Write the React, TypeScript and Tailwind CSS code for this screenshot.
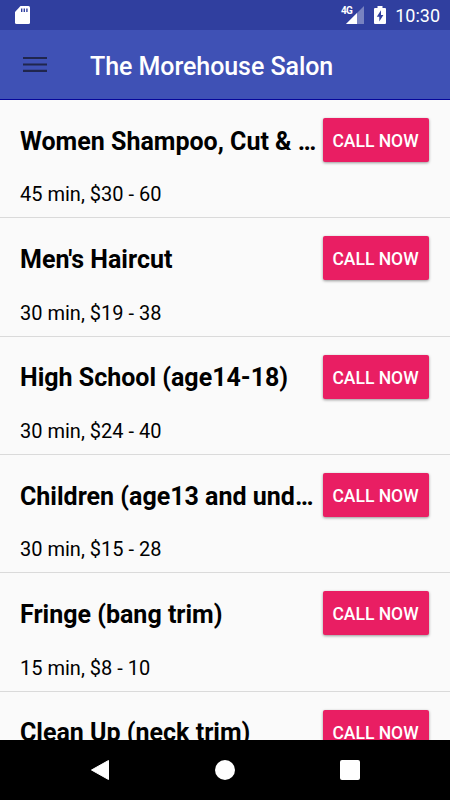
const services = [
  { name: 'Women Shampoo, Cut & …', detail: '45 min, $30 - 60' },
  { name: "Men's Haircut", detail: '30 min, $19 - 38' },
  { name: 'High School (age14-18)', detail: '30 min, $24 - 40' },
  { name: 'Children (age13 and und…', detail: '30 min, $15 - 28' },
  { name: 'Fringe (bang trim)', detail: '15 min, $8 - 10' },
  { name: 'Clean Up (neck trim)', detail: '' },
];

function StatusBar() {
  return (
    <div className="flex h-[30px] shrink-0 items-center bg-[#303f9f] pr-2.5 pl-[15px]">
      <svg width="15" height="18" viewBox="0 0 15 18">
        <path d="M5.5 0H13.5Q15 0 15 1.5V16.5Q15 18 13.5 18H1.5Q0 18 0 16.5V6Z" fill="#fff" />
        <path d="M6 2.5h1.4v3.5H6zM8.6 2.5h1.4v3.5H8.6zM11.2 2.5h1.4v3.5h-1.4z" fill="#303f9f" />
      </svg>
      <div className="ml-auto flex items-center">
        <div className="flex h-[18px] items-end">
          <span className="-mr-[6px] self-start text-[10px] leading-[10px] font-bold tracking-[-0.7px]">4G</span>
          <svg width="18" height="18" viewBox="0 0 18 18">
            <path d="M18 0V18H0Z" fill="#fff" fillOpacity="0.35" />
            <path d="M11 7V18H0Z" fill="#fff" />
          </svg>
        </div>
        <svg width="12" height="18" viewBox="0 0 12 18" className="ml-2.5">
          <path d="M3.5 0h5v2H11q1 0 1 1V17q0 1-1 1H1q-1 0-1-1V3q0-1 1-1h2.5Z" fill="#fff" />
          <path d="M7 4.2L2.8 10.7H5.3V15.5L9.4 9H7Z" fill="#303f9f" />
        </svg>
        <span className="mt-0.5 ml-[9px] text-[18px] leading-[28px]">10:30</span>
      </div>
    </div>
  );
}

export default function App() {
  return (
    <div className="flex h-[800px] w-[450px] flex-col overflow-hidden bg-[#fafafa] font-[Roboto,sans-serif] text-white">
      <StatusBar />
      <header className="flex h-[70px] shrink-0 items-center border-b border-[#06069a] bg-[#3f51b5] pl-[23px]">
        <button aria-label="Menu" className="flex">
          <svg width="24" height="17" viewBox="0 0 24 17" fill="#20264d">
            <path d="M0 1h24v2.1H0zM0 7.4h24v2.1H0zM0 13.8h24v2.1H0z" />
          </svg>
        </button>
        <h1 className="mt-1 ml-[43px] text-[25px] leading-8 font-medium tracking-[-0.06px]">The Morehouse Salon</h1>
      </header>
      <main className="min-h-0 flex-1 overflow-hidden text-black">
        {services.map((service) => (
          <section key={service.name} className="h-[118.35px] border-b border-[#dadada] pt-[18px] pr-[21.5px] pl-5">
            <div className="flex h-11 items-center justify-between">
              <h2 className="mt-[3px] text-[25px] leading-8 font-bold whitespace-nowrap">{service.name}</h2>
              <button className="h-11 w-[106px] shrink-0 rounded-[2px] bg-[#e91e63] pt-[2px] text-[17.5px] font-medium whitespace-nowrap text-white shadow-[0_1px_3px_rgba(0,0,0,0.4)]">
                CALL NOW
              </button>
            </div>
            {service.detail && <p className="mt-[20.3px] text-[20px] leading-6">{service.detail}</p>}
          </section>
        ))}
      </main>
      <nav className="relative z-10 flex h-[60px] shrink-0 items-center justify-center gap-[105px] bg-black">
        <svg width="20" height="22" viewBox="0 0 20 22">
          <path d="M18.5 1.5V20.5L1.5 11Z" fill="#fff" stroke="#fff" strokeLinejoin="round" />
        </svg>
        <span className="h-5 w-5 rounded-full bg-white" />
        <span className="h-5 w-5 rounded-[2px] bg-white" />
      </nav>
    </div>
  );
}
